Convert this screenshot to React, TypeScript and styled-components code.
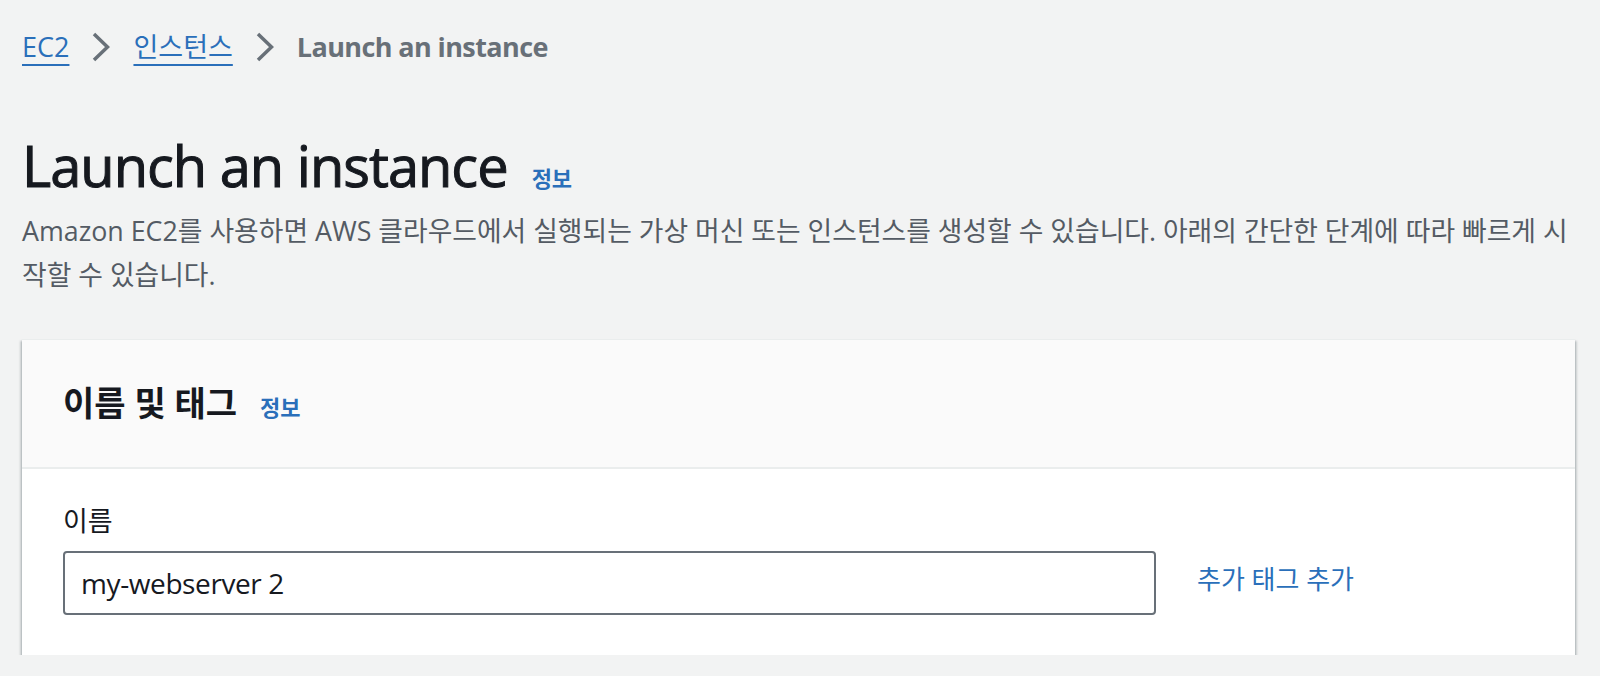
import React from 'react';
import styled, { createGlobalStyle } from 'styled-components';

const GlobalStyle = createGlobalStyle`
    body {
        margin: 0;
        background: #f2f3f3;
        font-family: 'Open Sans', 'Noto Sans CJK KR', sans-serif;
        color: #16191f;
    }
`;

const LINK = '#2a6fba';

const Page = styled.div`
    padding: 27px 25px 0 22px;
`;

const Breadcrumbs = styled.nav`
    display: flex;
    align-items: center;
    gap: 23px;
    height: 40px;
    font-size: 27px;
    line-height: 40px;
`;

const Crumb = styled.a`
    color: ${LINK};
    text-decoration: underline;
    text-decoration-thickness: 2px;
    text-underline-offset: 7px;
`;

const Current = styled.span`
    color: #687078;
    font-weight: 700;
    letter-spacing: -0.6px;
`;

const Chevron = () => (
    <svg width="18" height="30" viewBox="0 0 18 30" fill="none">
        <polyline points="2,2 15.5,15 2,28" stroke="#687078" strokeWidth="3.5" />
    </svg>
);

const TitleRow = styled.div`
    display: flex;
    align-items: baseline;
    gap: 24px;
    margin-top: 62px;
`;

const Title = styled.h1`
    margin: 0;
    font-size: 56px;
    line-height: 72px;
    font-weight: 400;
    letter-spacing: -1px;
    -webkit-text-stroke: 1px #16191f;
`;

const Info = styled.a`
    color: ${LINK};
    font-size: 22px;
    font-weight: 700;
`;

const Description = styled.p`
    margin: 8px 0 0;
    font-size: 26.8px;
    line-height: 44px;
    color: #545b64;
`;

const Card = styled.section`
    margin-top: 42px;
    background: #fff;
    border-top: 1px solid #eaeded;
    box-shadow: 0 2px 2px rgba(0, 28, 36, 0.3), 2px 2px 2px rgba(0, 28, 36, 0.15),
        -2px 2px 2px rgba(0, 28, 36, 0.15);
`;

const CardHeader = styled.header`
    display: flex;
    align-items: baseline;
    gap: 23px;
    padding: 39px 41px 40px;
    height: 48px;
    background: #fafafa;
    border-bottom: 2px solid #eaeded;
`;

const CardTitle = styled.h2`
    margin: 0;
    font-size: 34px;
    line-height: 48px;
    font-weight: 700;
`;

const CardBody = styled.div`
    padding: 32px 41px 40px;
`;

const Label = styled.label`
    display: block;
    font-size: 27px;
    line-height: 40px;
    margin-bottom: 10px;
`;

const FieldRow = styled.div`
    display: grid;
    grid-template-columns: 1093px auto;
    gap: 41px;
`;

const Input = styled.input`
    box-sizing: border-box;
    height: 64px;
    padding: 0 16px;
    border: 2px solid #687078;
    border-radius: 4px;
    font-family: 'Open Sans', 'Noto Sans CJK KR', sans-serif;
    font-size: 28px;
    letter-spacing: -0.4px;
    color: #16191f;
    background: #fff;
    outline: none;
`;

const AddTag = styled.a`
    align-self: start;
    margin-top: 8px;
    color: ${LINK};
    font-size: 26px;
    line-height: 40px;
`;

export default function App() {
    return (
        <>
            <GlobalStyle />
            <Page>
                <Breadcrumbs>
                    <Crumb>EC2</Crumb>
                    <Chevron />
                    <Crumb>인스턴스</Crumb>
                    <Chevron />
                    <Current>Launch an instance</Current>
                </Breadcrumbs>
                <TitleRow>
                    <Title>Launch an instance</Title>
                    <Info>정보</Info>
                </TitleRow>
                <Description>
                    Amazon EC2를 사용하면 AWS 클라우드에서 실행되는 가상 머신 또는 인스턴스를 생성할 수 있습니다. 아래의 간단한
                    단계에 따라 빠르게 시작할 수 있습니다.
                </Description>
                <Card>
                    <CardHeader>
                        <CardTitle>이름 및 태그</CardTitle>
                        <Info>정보</Info>
                    </CardHeader>
                    <CardBody>
                        <Label>이름</Label>
                        <FieldRow>
                            <Input defaultValue="my-webserver 2" />
                            <AddTag>추가 태그 추가</AddTag>
                        </FieldRow>
                    </CardBody>
                </Card>
            </Page>
        </>
    );
}
